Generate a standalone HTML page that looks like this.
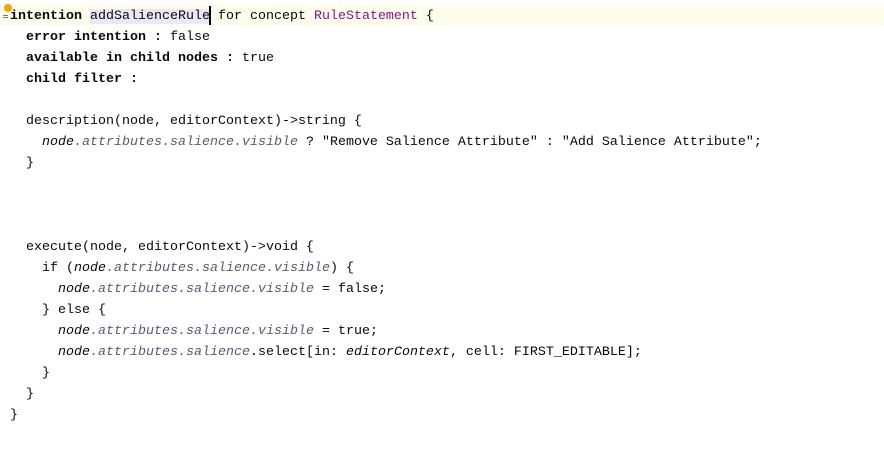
<!DOCTYPE html>
<html><head><style>
body{margin:0;width:884px;height:466px;background:#fff;position:relative;overflow:hidden;font-family:"Liberation Mono",monospace;font-size:13.33px;color:#080808}
.l{position:absolute;height:21px;line-height:21px;white-space:pre;margin-top:1px}
b{font-weight:bold}
.i{font-style:italic}
.g{font-style:italic;color:#5a5a72}
.p{color:#871094}
.hl{background:#eae8f8}
</style></head><body>
<div style="position:absolute;left:0;top:4px;width:884px;height:22px;background:#fefcea"></div>
<div style="position:absolute;left:4px;top:4px;width:8px;height:8px;border-radius:50%;background:#f0a30a"></div>
<div style="position:absolute;left:3px;top:15px;width:5px;height:1px;background:#777;box-shadow:0 2px 0 #777"></div>
<div class="l" style="left:10px;top:5px"><b>intention</b> <span class="hl">addSalienceRule</span> for concept <span class="p">RuleStatement</span> {</div>
<div style="position:absolute;left:209px;top:6px;width:2px;height:19px;background:#000"></div>
<div class="l" style="left:26px;top:26px"><b>error intention :</b> false</div>
<div class="l" style="left:26px;top:47px"><b>available in child nodes :</b> true</div>
<div class="l" style="left:26px;top:68px"><b>child filter :</b></div>
<div class="l" style="left:26px;top:110px">description(node, editorContext)-&gt;string {</div>
<div class="l" style="left:42px;top:131px"><span class="i">node</span><span class="g">.attributes.salience.visible</span> ? "Remove Salience Attribute" : "Add Salience Attribute";</div>
<div class="l" style="left:26px;top:152px">}</div>
<div class="l" style="left:26px;top:236px">execute(node, editorContext)-&gt;void {</div>
<div class="l" style="left:42px;top:257px">if (<span class="i">node</span><span class="g">.attributes.salience.visible</span>) {</div>
<div class="l" style="left:58px;top:278px"><span class="i">node</span><span class="g">.attributes.salience.visible</span> = false;</div>
<div class="l" style="left:42px;top:299px">} else {</div>
<div class="l" style="left:58px;top:320px"><span class="i">node</span><span class="g">.attributes.salience.visible</span> = true;</div>
<div class="l" style="left:58px;top:341px"><span class="i">node</span><span class="g">.attributes.salience</span>.select[in: <span class="i">editorContext</span>, cell: FIRST_EDITABLE];</div>
<div class="l" style="left:42px;top:362px">}</div>
<div class="l" style="left:26px;top:383px">}</div>
<div class="l" style="left:10px;top:404px">}</div>
</body></html>
